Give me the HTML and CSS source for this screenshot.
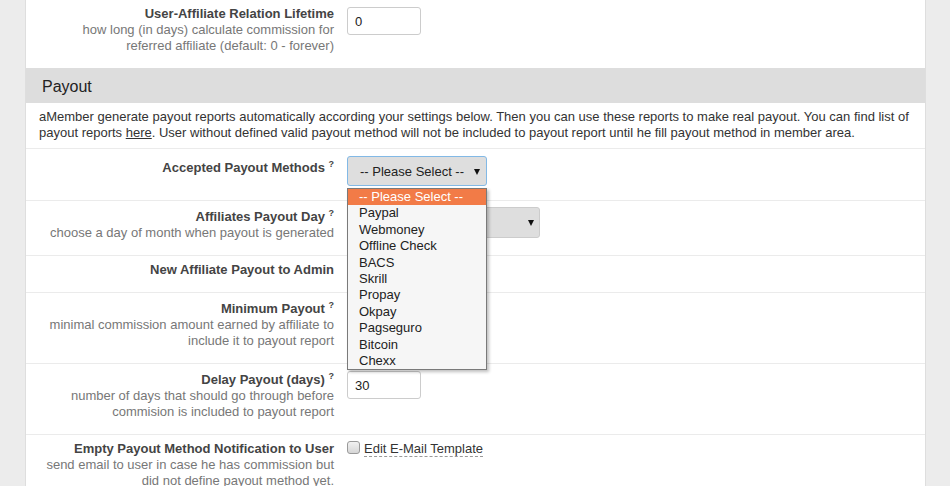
FILE: index.html
```html
<!DOCTYPE html>
<html>
<head>
<meta charset="utf-8">
<title>Payout settings</title>
<link rel="stylesheet" href="styles.css">
</head>
<body>
<div class="page">
  <div class="row">
    <div class="label">
      <div class="title">User-Affiliate Relation Lifetime</div>
      <div class="desc">how long (in days) calculate commission for referred affiliate (default: 0 - forever)</div>
    </div>
    <div class="field"><input class="text" type="text" value="0"></div>
  </div>

  <div class="section">Payout</div>
  <div class="intro">aMember generate payout reports automatically according your settings below. Then you can use these reports to make real payout. You can find list of payout reports <a href="#">here</a>. User without defined valid payout method will not be included to payout report until he fill payout method in member area.</div>

  <div class="row">
    <div class="label">
      <div class="title title-select">Accepted Payout Methods <sup>?</sup></div>
    </div>
    <div class="field">
      <div class="select-wrap">
        <div class="select focused">-- Please Select --</div>
        <ul class="listbox">
          <li class="active">-- Please Select --</li>
          <li>Paypal</li>
          <li>Webmoney</li>
          <li>Offline Check</li>
          <li>BACS</li>
          <li>Skrill</li>
          <li>Propay</li>
          <li>Okpay</li>
          <li>Pagseguro</li>
          <li>Bitcoin</li>
          <li>Chexx</li>
        </ul>
      </div>
    </div>
  </div>

  <div class="row">
    <div class="label">
      <div class="title">Affiliates Payout Day <sup>?</sup></div>
      <div class="desc">choose a day of month when payout is generated</div>
    </div>
    <div class="field">
      <div class="select-wrap">
        <div class="select wide">1</div>
      </div>
    </div>
  </div>

  <div class="row">
    <div class="label">
      <div class="title">New Affiliate Payout to Admin</div>
    </div>
    <div class="field check-field">
      <span class="checkbox"></span><a class="dashed" href="#">Edit E-Mail Template</a>
    </div>
  </div>

  <div class="row">
    <div class="label">
      <div class="title">Minimum Payout <sup>?</sup></div>
      <div class="desc">minimal commission amount earned by affiliate to include it to payout report</div>
    </div>
    <div class="field"><input class="text" type="text" value=""></div>
  </div>

  <div class="row">
    <div class="label">
      <div class="title">Delay Payout (days) <sup>?</sup></div>
      <div class="desc">number of days that should go through before commision is included to payout report</div>
    </div>
    <div class="field"><input class="text" type="text" value="30"></div>
  </div>

  <div class="row">
    <div class="label">
      <div class="title">Empty Payout Method Notification to User</div>
      <div class="desc">send email to user in case he has commission but did not define payout method yet.</div>
    </div>
    <div class="field check-field">
      <span class="checkbox"></span><a class="dashed" href="#">Edit E-Mail Template</a>
    </div>
  </div>
</div>
</body>
</html>
```

FILE: styles.css
```css
html {
  overflow: hidden;
}
body {
  margin: 0;
  background: #ececec;
  font-family: "Liberation Sans", Arial, sans-serif;
  font-size: 13px;
  line-height: 16px;
  color: #333;
}
.page {
  margin-left: 25px;
  width: 899px;
  min-height: 486px;
  background: #fff;
  border-left: 1px solid #dedede;
  border-right: 1px solid #dedede;
}
.row {
  display: flex;
  padding: 6px 0 14px;
  border-bottom: 1px solid #ebebeb;
}
.row:first-child {
  border-bottom: none;
}
.label {
  width: 295px;
  flex: none;
  padding: 0 13px;
  text-align: right;
}
.title {
  font-weight: bold;
  color: #444;
}
.title-select {
  padding-top: 3px;
}
.title sup {
  font-size: 9px;
  line-height: 13px;
  vertical-align: 5px;
}
.desc {
  color: #777;
}
.field {
  padding-top: 1px;
  flex: 1;
}
.text {
  box-sizing: border-box;
  width: 74px;
  height: 28px;
  margin: 0;
  padding: 0 7px;
  border: 1px solid #ccc;
  border-radius: 3px;
  font-family: "Liberation Sans", Arial, sans-serif;
  font-size: 13px;
  color: #222;
  background: #fff;
}
.section {
  background: #ddd;
  padding: 9px 16px 7px;
  font-size: 16px;
  line-height: 19px;
  color: #222;
}
.intro {
  padding: 6px 8px 7px 13px;
  border-bottom: 1px solid #ebebeb;
  color: #333;
}
.intro a {
  color: #333;
  text-decoration: underline;
}
.select-wrap {
  position: relative;
  display: inline-block;
  vertical-align: top;
}
.select {
  position: relative;
  box-sizing: border-box;
  width: 140px;
  height: 30px;
  padding-left: 12px;
  line-height: 29px;
  background: #dedede;
  border: 1px solid #ccc;
  border-radius: 3px;
  color: #222;
}
.select.focused {
  border-color: #82b9e6;
}
.select.wide {
  width: 193px;
  height: 31px;
  margin-top: -1px;
  line-height: 29px;
}
.select::after {
  content: "";
  position: absolute;
  right: 6px;
  top: 12px;
  border-left: 3px solid transparent;
  border-right: 3px solid transparent;
  border-top: 6px solid #111;
}
.select.wide::after {
  right: 5px;
  top: 12px;
}
.listbox {
  position: absolute;
  z-index: 10;
  left: 0;
  top: 32px;
  box-sizing: border-box;
  width: 140px;
  margin: 0;
  padding: 0;
  list-style: none;
  background: #f6f6f6;
  border: 1px solid #7a7a7a;
  box-shadow: 2px 2px 3px rgba(0, 0, 0, 0.25);
}
.listbox li {
  height: 16.4px;
  line-height: 16.4px;
  padding-left: 11px;
  color: #222;
  white-space: nowrap;
}
.listbox li.active {
  background: #f27b47;
  color: #fff;
}
.check-field {
  padding-top: 0;
}
.checkbox {
  display: inline-block;
  box-sizing: border-box;
  width: 13px;
  height: 13px;
  margin-right: 4px;
  vertical-align: -1px;
  border: 1px solid #9a9a9a;
  border-radius: 3px;
  background: linear-gradient(#f2f2f2, #d6d6d6);
}
.dashed {
  color: #333;
  text-decoration: none;
  border-bottom: 1px dashed #999;
}
```
